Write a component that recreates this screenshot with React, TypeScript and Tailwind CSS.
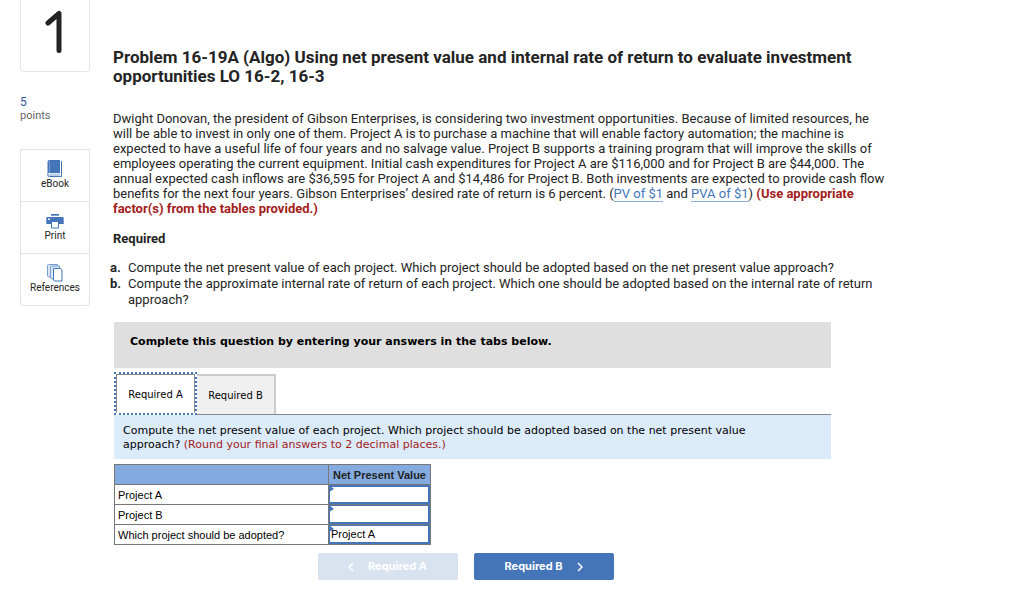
import { useState } from "react";

const BookIcon = () => (
  <svg width="16" height="18" viewBox="0 0 16 18" aria-hidden="true">
    <path d="M2.500 0H13v13H2.500a2 2 0 0 0-2 1.500V2a2 2 0 0 1 2-2z" fill="#4375b8" />
    <path d="M2.500 13.500H13V16H2.500a1.250 1.250 0 0 1 0-2.500z" fill="#bccfe8" />
    <path d="M14.500 1v15.500H2.500a2 2 0 0 1-2-2" fill="none" stroke="#4375b8" />
    <path d="M2.500 .5v12.500" stroke="#7c9fd0" />
  </svg>
);

const PrintIcon = () => (
  <svg width="18" height="16" viewBox="0 0 18 16" aria-hidden="true">
    <path d="M5 1.500h8" stroke="#4375b8" />
    <path d="M5 2.500h8" stroke="#7c9fd0" />
    <path d="M1.500 4h15A1.200 1.200 0 0 1 17.700 5.200V11H.3V5.200A1.200 1.200 0 0 1 1.500 4z" fill="#4375b8" />
    <path d="M2 5.500h2v1.500H2z" fill="#fff" />
    <path d="M5.500 8.500h7V15h-7z" fill="#fff" stroke="#4375b8" />
  </svg>
);

const ReferencesIcon = () => (
  <svg width="16" height="18" viewBox="0 0 16 18" aria-hidden="true">
    <g fill="#dbe6f4" stroke="#7c9fd0">
      <path d="M.5 1.500a1 1 0 0 1 1-1h9V13h-9l-1-1z" />
      <path d="M3.500 3a1 1 0 0 1 1-1h8v13h-8l-1-1z" />
    </g>
    <path d="M6.500 4.500h7l1.500 1.500v11H7.500l-1-1z" fill="#fff" stroke="#4375b8" />
  </svg>
);

const tools = [
  { label: "eBook", icon: <BookIcon /> },
  { label: "Print", icon: <PrintIcon /> },
  { label: "References", icon: <ReferencesIcon /> },
];

const Marker = () => (
  <svg className="pointer-events-none absolute left-0 top-0" width="5" height="7" viewBox="0 0 5 7" aria-hidden="true">
    <path d="M0 0l5 4-5 3z" fill="#4375b8" />
  </svg>
);

const Sidebar = () => (
  <aside className="w-[70px] shrink-0">
    <div className="flex h-[72px] justify-center rounded-b border border-t-0 border-[#e6e6e6] pr-[3px] pt-[9px]">
      <svg width="18" height="46" viewBox="0 0 18 46" role="img" aria-label="Question 1">
        <path d="M3 14L14 4.500v37" fill="none" stroke="#242424" strokeWidth="5" strokeLinecap="round" strokeLinejoin="round" />
      </svg>
    </div>
    <div className="mt-[23px] text-xs leading-[14px]">
      <p className="text-[#2f5597]">5</p>
      <p className="text-[11px] text-[#666]">points</p>
    </div>
    <div className="mt-[26px] overflow-hidden rounded-b border border-b-0 border-[#e3e3e3]">
      {tools.map((tool) => (
        <button
          key={tool.label}
          className="flex h-[52px] w-full flex-col items-center border-b border-[#e3e3e3] pt-[9px] text-[10px] leading-3 last:rounded-b"
        >
          <span className="flex h-[19px] items-center">{tool.icon}</span>
          {tool.label}
        </button>
      ))}
    </div>
  </aside>
);

const AnswerTable = () => {
  const [projectA, setProjectA] = useState("");
  const [projectB, setProjectB] = useState("");

  return (
    <table className="mt-[5px] w-[317px] table-fixed border-collapse font-['Liberation_Sans',Arial,sans-serif] text-[11px] leading-4 text-black">
      <thead>
        <tr className="h-5 bg-[#84abdf]">
          <th className="w-[214px] border border-[#777]" aria-label="Item"></th>
          <th className="whitespace-nowrap border border-[#777] text-[#222]">Net Present Value</th>
        </tr>
      </thead>
      <tbody>
        <tr className="h-5">
          <td className="border border-[#777] px-[3px]">
            <label htmlFor="npv-a">Project A</label>
          </td>
          <td className="relative border border-[#777] p-0">
            <input
              id="npv-a"
              value={projectA}
              onChange={(e) => setProjectA(e.target.value)}
              className="block h-[19px] w-full border-2 border-l border-[#4375b8] px-1 text-right outline-none"
            />
            <Marker />
          </td>
        </tr>
        <tr className="h-5">
          <td className="border border-[#777] px-[3px]">
            <label htmlFor="npv-b">Project B</label>
          </td>
          <td className="relative border border-[#777] p-0">
            <input
              id="npv-b"
              value={projectB}
              onChange={(e) => setProjectB(e.target.value)}
              className="block h-[19px] w-full border-2 border-l border-t border-[#4375b8] px-1 text-right outline-none"
            />
            <Marker />
          </td>
        </tr>
        <tr className="h-5">
          <td className="border border-[#777] px-[3px]">
            <label htmlFor="adopted">Which project should be adopted?</label>
          </td>
          <td className="relative border border-[#777] p-0">
            <select
              id="adopted"
              defaultValue="Project A"
              className="block h-[19px] w-full appearance-none border-2 border-l border-t border-[#4375b8] px-px outline-none"
            >
              <option>Project A</option>
              <option>Project B</option>
            </select>
            <Marker />
          </td>
        </tr>
      </tbody>
    </table>
  );
};

export default function App() {
  return (
    <div className="flex min-h-screen gap-[23px] bg-white pl-5 font-['Roboto',sans-serif] text-[#242424]">
      <Sidebar />
      <main className="min-w-0 flex-1 pr-[110px]">
        <h1 className="mt-12 text-[17px] font-bold leading-[19px]">
          Problem 16-19A (Algo) Using net present value and internal rate of return to evaluate investment
          <br />
          opportunities LO 16-2, 16-3
        </h1>

        <div className="text-[13px] leading-[15px]">
          <p className="mt-[25px] whitespace-nowrap">
            Dwight Donovan, the president of Gibson Enterprises, is considering two investment opportunities. Because of limited resources, he
            <br />
            will be able to invest in only one of them. Project A is to purchase a machine that will enable factory automation; the machine is
            <br />
            expected to have a useful life of four years and no salvage value. Project B supports a training program that will improve the skills of
            <br />
            employees operating the current equipment. Initial cash expenditures for Project A are $116,000 and for Project B are $44,000. The
            <br />
            annual expected cash inflows are $36,595 for Project A and $14,486 for Project B. Both investments are expected to provide cash flow
            <br />
            benefits for the next four years. Gibson Enterprises’ desired rate of return is 6 percent. (
            <a href="#pv" className="border-b border-[#8fb0da] text-[#4375b8]">PV of $1</a> and{" "}
            <a href="#pva" className="border-b border-[#8fb0da] text-[#4375b8]">PVA of $1</a>){" "}
            <strong className="text-[#a3201b]">
              (Use appropriate
              <br />
              factor(s) from the tables provided.)
            </strong>
          </p>
          <h2 className="mt-[15px] font-bold">Required</h2>
          <ol className="-ml-[3px] mt-[14px] whitespace-nowrap leading-4">
            <li className="flex">
              <b className="w-[18px] shrink-0">a.</b>
              <span>Compute the net present value of each project. Which project should be adopted based on the net present value approach?</span>
            </li>
            <li className="flex">
              <b className="w-[18px] shrink-0">b.</b>
              <span>
                Compute the approximate internal rate of return of each project. Which one should be adopted based on the internal rate of return
                <br />
                approach?
              </span>
            </li>
          </ol>
        </div>

        <section className="ml-px mr-[83px] mt-[14px] font-['DejaVu_Sans',Verdana,sans-serif] text-[11px] text-black">
          <p className="h-[46px] bg-[#dfdfdf] px-4 pt-[13px] font-bold leading-[14px]">
            Complete this question by entering your answers in the tabs below.
          </p>
          <div role="tablist" className="mt-[5px] flex h-[42px] items-end border-b border-[#888] text-[10px]">
            <button role="tab" aria-selected="true" className="-mb-px h-[43px] w-[83px] border-2 border-dotted border-[#4375b8] bg-white">
              <span className="flex h-full items-center justify-center border border-b-0 border-[#888]">Required A</span>
            </button>
            <button role="tab" aria-selected="false" className="h-10 w-[79px] border-2 border-b-0 border-l-0 border-[#ccc] bg-[#f0f0f0]">
              Required B
            </button>
          </div>
          <p className="h-11 whitespace-nowrap bg-[#dcebf9] px-[9px] pt-[9px] leading-[14px]">
            Compute the net present value of each project. Which project should be adopted based on the net present value
            <br />
            approach? <span className="text-[#a3201b]">(Round your final answers to 2 decimal places.)</span>
          </p>
          <AnswerTable />
          <div className="mt-2 flex justify-center gap-4 pr-[14px] font-['Inter',sans-serif] text-[11px] font-bold text-white">
            <button disabled className="flex h-[27px] w-[140px] items-center justify-center gap-[14px] rounded-[2px] bg-[#d9e3f0]">
              <svg width="6" height="10" viewBox="0 0 6 10" aria-hidden="true">
                <path d="M5 1L1 5l4 4" fill="none" stroke="#fff" strokeWidth="1.500" />
              </svg>
              Required A
            </button>
            <button className="flex h-[27px] w-[140px] items-center justify-center gap-[14px] rounded-[2px] bg-[#4375b8]">
              Required B
              <svg width="6" height="10" viewBox="0 0 6 10" aria-hidden="true">
                <path d="M1 1l4 4-4 4" fill="none" stroke="#fff" strokeWidth="1.500" />
              </svg>
            </button>
          </div>
        </section>
      </main>
    </div>
  );
}
